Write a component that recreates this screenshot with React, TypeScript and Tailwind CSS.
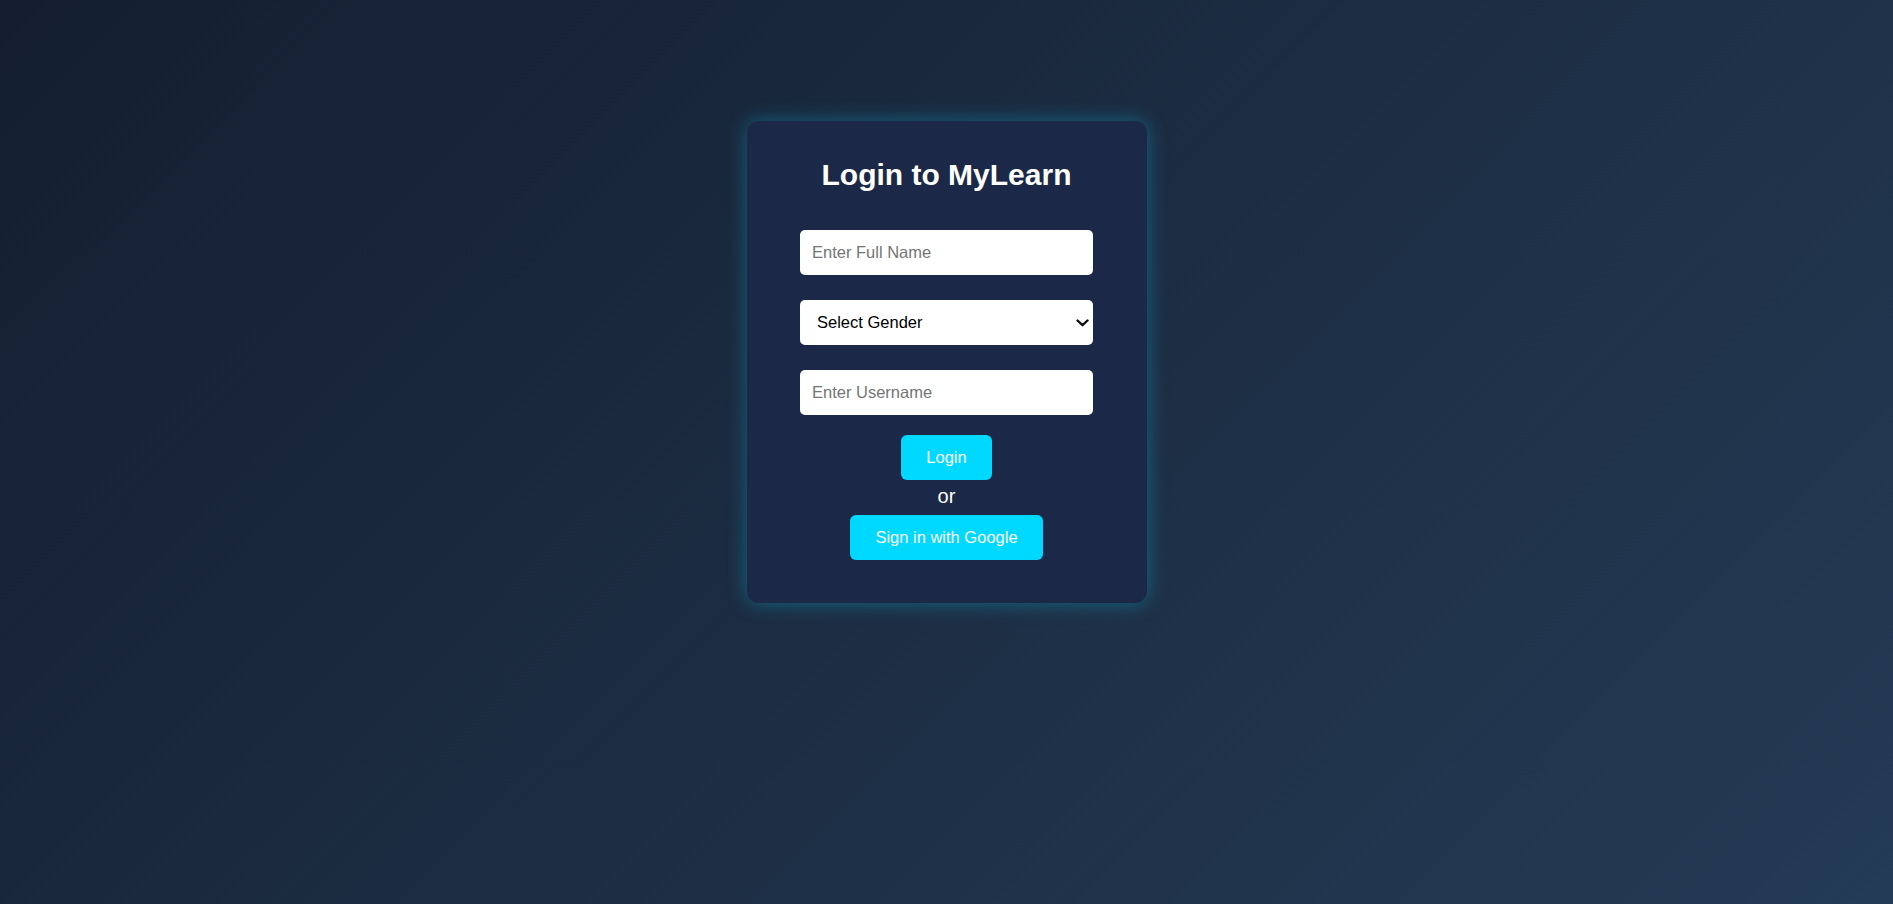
import React from "react";

export default function App() {
  const [fullName, setFullName] = React.useState("");
  const [gender, setGender] = React.useState("");
  const [username, setUsername] = React.useState("");

  return (
    <div className="min-h-screen w-full bg-[linear-gradient(135deg,#141e30,#243b55)] font-['Liberation_Sans',Arial,sans-serif] text-white">
      {/* Login card */}
      <div className="mx-auto w-[400px] pt-[121px]">
        <div className="flex flex-col items-center rounded-xl bg-[#1c2847] pt-[37px] pb-[43px] shadow-[0_0_20px_rgba(0,212,255,0.35)]">
          <h2 className="text-[30px] leading-[34px] font-bold">Login to MyLearn</h2>

          <form
            className="mt-[38px] flex flex-col items-center"
            onSubmit={(e) => e.preventDefault()}
          >
            <input
              type="text"
              placeholder="Enter Full Name"
              value={fullName}
              onChange={(e) => setFullName(e.target.value)}
              className="h-[45px] w-[293px] rounded-[5px] bg-white px-3 text-[16.5px] text-black placeholder:text-[#757575] outline-none"
            />
            <div className="relative mt-[25px]">
              <select
                value={gender}
                onChange={(e) => setGender(e.target.value)}
                className="h-[45px] w-[293px] appearance-none rounded-[5px] bg-white pl-[17px] pr-6 text-[16.5px] text-black outline-none"
              >
                <option value="">Select Gender</option>
                <option value="male">Male</option>
                <option value="female">Female</option>
                <option value="other">Other</option>
              </select>
              {/* chevron */}
              <svg
                width="13"
                height="8"
                viewBox="0 0 13 8"
                fill="none"
                className="pointer-events-none absolute right-[4px] top-[19px]"
              >
                <path
                  d="M1.5 1.5L6.5 6.2L11.5 1.5"
                  stroke="#111"
                  strokeWidth="2.4"
                  strokeLinecap="round"
                  strokeLinejoin="round"
                />
              </svg>
            </div>
            <input
              type="text"
              placeholder="Enter Username"
              value={username}
              onChange={(e) => setUsername(e.target.value)}
              className="mt-[25px] h-[45px] w-[293px] rounded-[5px] bg-white px-3 text-[16.5px] text-black placeholder:text-[#757575] outline-none"
            />

            <button
              type="submit"
              className="mt-[20px] flex h-[45px] items-center justify-center rounded-md bg-[#00d9ff] px-[25px] text-[16.5px] text-white"
            >
              Login
            </button>
            <p className="mt-[5px] text-[20px] leading-[23px]">or</p>
            <button
              type="button"
              className="mt-[7px] flex h-[45px] items-center justify-center rounded-md bg-[#00d9ff] px-[25px] text-[16.5px] text-white"
            >
              Sign in with Google
            </button>
          </form>
        </div>
      </div>
    </div>
  );
}
